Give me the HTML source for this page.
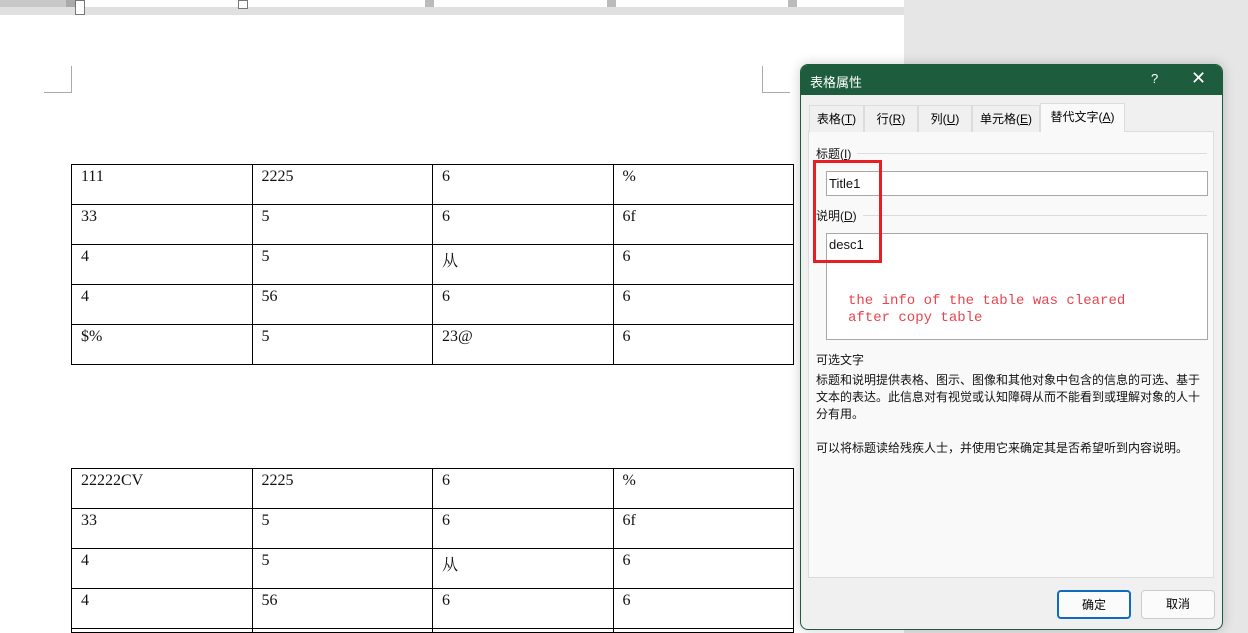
<!DOCTYPE html>
<html><head><meta charset="utf-8"><style>
*{margin:0;padding:0;box-sizing:border-box}
html,body{width:1248px;height:633px;overflow:hidden}
body{background:#e6e6e6;position:relative;font-family:"Liberation Sans","Noto Sans CJK SC",sans-serif}
.abs{position:absolute}
.ruler{left:0;top:0;width:904px;height:7px;background:#c8c8c8}
.rw{top:0;height:7px;background:#fff}
.page{left:0;top:15px;width:904px;height:618px;background:#fff;overflow:hidden}
table{position:absolute;border-collapse:collapse;table-layout:fixed;width:723px;font-family:"Liberation Serif","Noto Serif CJK SC",serif;font-size:16px;color:#111}
td{border:1px solid #000;height:40px;vertical-align:top;padding:3px 9px 0}
.dlg{left:800px;top:64px;width:423px;height:566px;background:#f0f0f0;border:1px solid #1d5c3c;border-radius:8px;overflow:hidden;box-shadow:0 0 12px rgba(0,0,0,.2)}
.tb{left:0;top:0;width:100%;height:30px;background:#1d5c3c;color:#fff;font-size:13px}
.cj{font-size:12px;color:#111}
.tab{top:40px;height:27px;border:1px solid #dcdcdc;border-bottom:none;font-size:12px;text-align:center;line-height:26px;background:#f0f0f0}
.panel{left:7px;top:66px;width:406px;height:447px;background:#f9f9f9;border:1px solid #dcdcdc}
.inp{background:#fff;border:1px solid #a8a8a8}
.btn{top:525px;width:74px;height:29px;background:#fbfbfb;border:1px solid #ccc;border-radius:4px;font-size:12px;text-align:center;line-height:27px}
.hr{height:1px;background:#dcdcdc}
</style></head><body>
<div class="abs ruler"></div>
<div class="abs rw" style="left:80px;width:824px"></div>
<div class="abs" style="left:66px;top:0;width:9px;height:7px;background:#aaa"></div>
<div class="abs" style="left:425px;top:0;width:9px;height:7px;background:#bbb"></div>
<div class="abs" style="left:607px;top:0;width:9px;height:7px;background:#bbb"></div>
<div class="abs" style="left:788px;top:0;width:9px;height:7px;background:#bbb"></div>
<div class="abs" style="left:0;top:7px;width:904px;height:8px;background:#e0e0e0"></div>
<div class="abs" style="left:75px;top:0;width:10px;height:15px;border:1px solid #777;background:#fff"></div>
<div class="abs" style="left:238px;top:0;width:10px;height:9px;border:1px solid #777;background:#fff"></div>
<div class="abs page">
<div class="abs" style="left:44px;top:51px;width:28px;height:27px;border-right:1px solid #aaa;border-bottom:1px solid #aaa"></div>
<div class="abs" style="left:762px;top:51px;width:28px;height:27px;border-left:1px solid #aaa;border-bottom:1px solid #aaa"></div>
<table style="left:71px;top:149px">
<tr><td>111</td><td>2225</td><td>6</td><td>%</td></tr>
<tr><td>33</td><td>5</td><td>6</td><td>6f</td></tr>
<tr><td>4</td><td>5</td><td>从</td><td>6</td></tr>
<tr><td>4</td><td>56</td><td>6</td><td>6</td></tr>
<tr><td>$%</td><td>5</td><td>23@</td><td>6</td></tr>
</table>
<table style="left:71px;top:453px">
<tr><td>22222CV</td><td>2225</td><td>6</td><td>%</td></tr>
<tr><td>33</td><td>5</td><td>6</td><td>6f</td></tr>
<tr><td>4</td><td>5</td><td>从</td><td>6</td></tr>
<tr><td>4</td><td>56</td><td>6</td><td>6</td></tr>
<tr><td style="height:4px;padding:0"></td><td style="height:4px;padding:0"></td><td style="height:4px;padding:0"></td><td style="height:4px;padding:0"></td></tr>
</table>
</div>
<div class="abs dlg">
<div class="abs tb"><span class="abs" style="left:9px;top:7px">表格属性</span><span class="abs" style="left:350px;top:6px">?</span><span class="abs" style="left:390px;top:3px;font-size:18px">✕</span></div>
<div class="abs panel"></div>
<div class="abs tab" style="left:8px;width:55px">表格(<u>T</u>)</div>
<div class="abs tab" style="left:63px;width:54px">行(<u>R</u>)</div>
<div class="abs tab" style="left:117px;width:54px">列(<u>U</u>)</div>
<div class="abs tab" style="left:171px;width:68px">单元格(<u>E</u>)</div>
<div class="abs tab" style="left:239px;width:85px;top:38px;height:29px;background:#f9f9f9">替代文字(<u>A</u>)</div>
<div class="abs cj" style="left:15px;top:80px">标题(<u>I</u>)</div>
<div class="abs hr" style="left:56px;top:88px;width:350px"></div>
<div class="abs inp" style="left:25px;top:106px;width:382px;height:25px"><span class="abs cj" style="left:2px;top:4px;font-size:13px">Title1</span></div>
<div class="abs cj" style="left:15px;top:142px">说明(<u>D</u>)</div>
<div class="abs hr" style="left:62px;top:150px;width:344px"></div>
<div class="abs inp" style="left:25px;top:168px;width:382px;height:107px"><span class="abs cj" style="left:2px;top:3px;font-size:13px">desc1</span>
<div class="abs" style="left:21px;top:59px;font-family:'Liberation Mono',monospace;font-size:14px;line-height:17px;color:#e8444e;white-space:pre">the info of the table was cleared
after copy table</div></div>
<div class="abs" style="left:12px;top:95px;width:69px;height:103px;border:3px solid #e81e25"></div>
<div class="abs cj" style="left:15px;top:286px">可选文字</div>
<div class="abs cj" style="left:15px;top:307px;width:390px;line-height:17px">标题和说明提供表格、图示、图像和其他对象中包含的信息的可选、基于文本的表达。此信息对有视觉或认知障碍从而不能看到或理解对象的人十分有用。<br><br>可以将标题读给残疾人士，并使用它来确定其是否希望听到内容说明。</div>
<div class="abs btn" style="left:256px;border:2px solid #0f6cbd">确定</div>
<div class="abs btn" style="left:340px">取消</div>
</div>
</body></html>
